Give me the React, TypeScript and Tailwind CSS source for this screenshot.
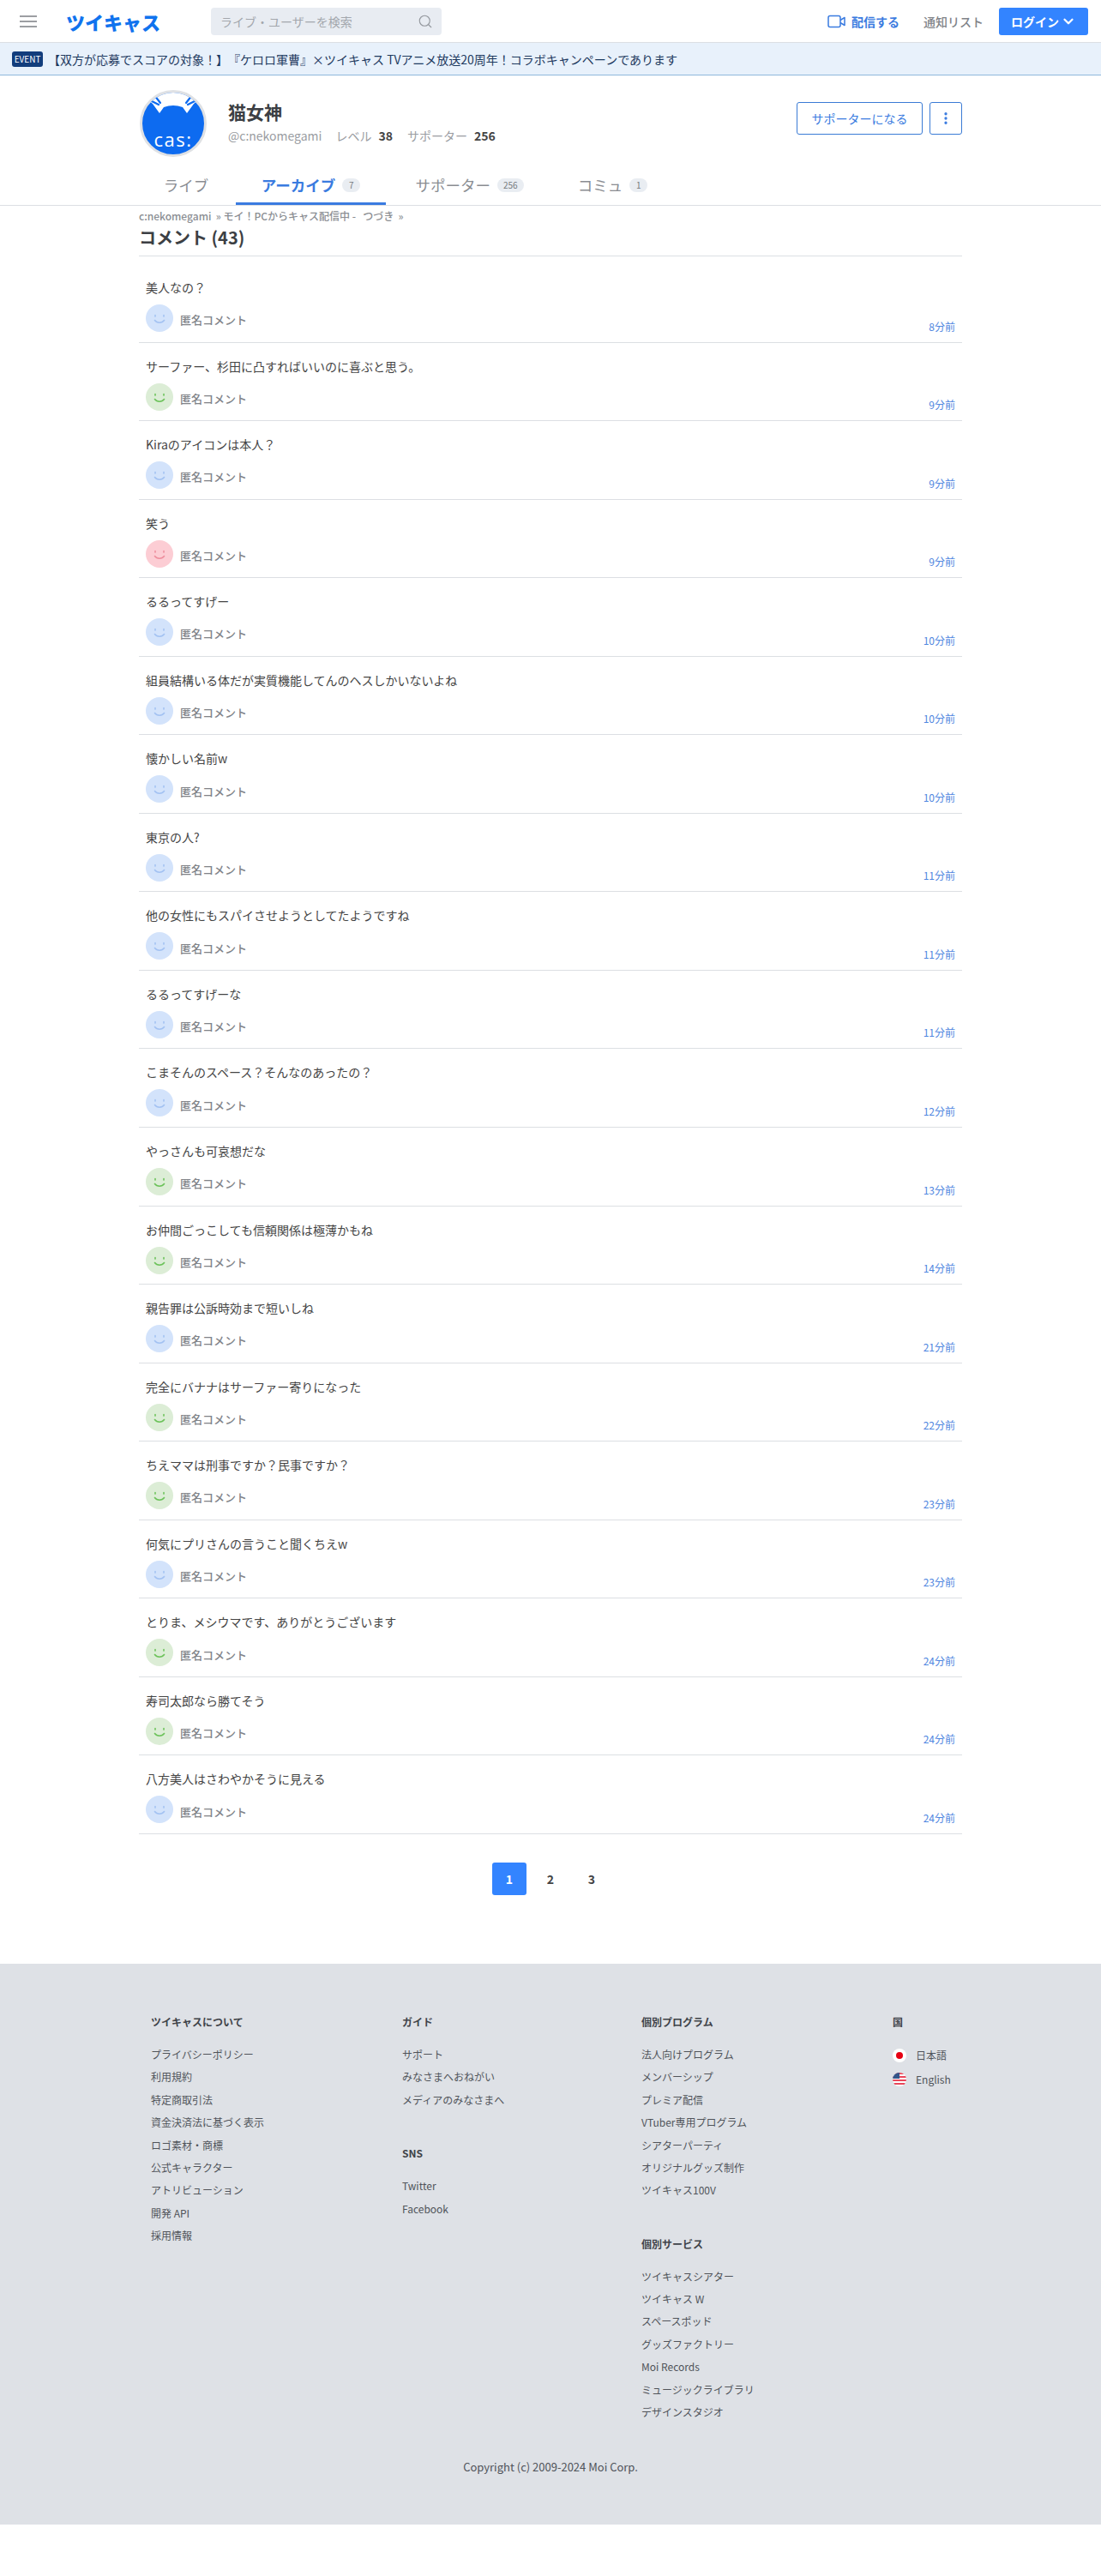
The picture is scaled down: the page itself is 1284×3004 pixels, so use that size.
import { ChevronDown, EllipsisVertical, Search } from 'lucide-react'

const FONT = 'font-["Noto_Sans_CJK_JP","Noto_Sans",sans-serif]'

type Tone = 'blue' | 'green' | 'pink'

const COMMENTS: { text: string; time: string; tone: Tone }[] = [
  { text: '美人なの？', time: '8分前', tone: 'blue' },
  { text: 'サーファー、杉田に凸すればいいのに喜ぶと思う。', time: '9分前', tone: 'green' },
  { text: 'Kiraのアイコンは本人？', time: '9分前', tone: 'blue' },
  { text: '笑う', time: '9分前', tone: 'pink' },
  { text: 'るるってすげー', time: '10分前', tone: 'blue' },
  { text: '組員結構いる体だが実質機能してんのヘスしかいないよね', time: '10分前', tone: 'blue' },
  { text: '懐かしい名前w', time: '10分前', tone: 'blue' },
  { text: '東京の人?', time: '11分前', tone: 'blue' },
  { text: '他の女性にもスパイさせようとしてたようですね', time: '11分前', tone: 'blue' },
  { text: 'るるってすげーな', time: '11分前', tone: 'blue' },
  { text: 'こまそんのスペース？そんなのあったの？', time: '12分前', tone: 'blue' },
  { text: 'やっさんも可哀想だな', time: '13分前', tone: 'green' },
  { text: 'お仲間ごっこしても信頼関係は極薄かもね', time: '14分前', tone: 'green' },
  { text: '親告罪は公訴時効まで短いしね', time: '21分前', tone: 'blue' },
  { text: '完全にバナナはサーファー寄りになった', time: '22分前', tone: 'green' },
  { text: 'ちえママは刑事ですか？民事ですか？', time: '23分前', tone: 'green' },
  { text: '何気にプリさんの言うこと聞くちえw', time: '23分前', tone: 'blue' },
  { text: 'とりま、メシウマです、ありがとうございます', time: '24分前', tone: 'green' },
  { text: '寿司太郎なら勝てそう', time: '24分前', tone: 'green' },
  { text: '八方美人はさわやかそうに見える', time: '24分前', tone: 'blue' },
]

const TONES = {
  blue: { bg: 'bg-[#d3e3fb]', stroke: '#a3c2f2' },
  green: { bg: 'bg-[#dcedd6]', stroke: '#6cc25a' },
  pink: { bg: 'bg-[#fccdd4]', stroke: '#ee8f9e' },
}

const FOOTER_LEFT = ['プライバシーポリシー', '利用規約', '特定商取引法', '資金決済法に基づく表示', 'ロゴ素材・商標', '公式キャラクター', 'アトリビューション', '開発 API', '採用情報']
const FOOTER_GUIDE = ['サポート', 'みなさまへおねがい', 'メディアのみなさまへ']
const FOOTER_SNS = ['Twitter', 'Facebook']
const FOOTER_PROGRAM = ['法人向けプログラム', 'メンバーシップ', 'プレミア配信', 'VTuber専用プログラム', 'シアターパーティ', 'オリジナルグッズ制作', 'ツイキャス100V']
const FOOTER_SERVICE = ['ツイキャスシアター', 'ツイキャス W', 'スペースポッド', 'グッズファクトリー', 'Moi Records', 'ミュージックライブラリ', 'デザインスタジオ']

const Smiley = ({ tone }: { tone: Tone }) => (
  <div className={`w-8 h-8 rounded-full flex items-center justify-center shrink-0 ${TONES[tone].bg}`}>
    <svg width="32" height="32" viewBox="0 0 32 32" fill="none" stroke={TONES[tone].stroke} strokeWidth="1.6" strokeLinecap="round">
      <path d="M11 12.5v1.600M21 12.5v1.600" />
      <path d="M10.5 18.500c2.500 3.600 8.500 3.600 11 0" />
    </svg>
  </div>
)

const Avatar = () => (
  <div className="w-[78px] h-[78px] rounded-full border-[3px] border-[#dfe1e4] overflow-hidden bg-[#0d6bf0] relative shrink-0">
    <svg className="absolute inset-0" width="72" height="72" viewBox="0 0 72 72">
      <path d="M8 0H64L66 8L60 13L52 24L47 17Q36 13 25 17L20 24L12 13L6 8Z" fill="#fff" />
      <path d="M0 0H14L10 5L3 9L0 10ZM72 0H58L62 5L69 9L72 10Z" fill="#0d6bf0" />
      <g stroke="#0d6bf0" strokeWidth="2.2" fill="none" strokeLinecap="round">
        <path d="M9 9l10 5M14 3l7 9" />
        <path d="M63 9l-10 5M58 3l-7 9" />
      </g>
    </svg>
    <span className="absolute left-0 right-0 top-[41px] text-center text-[22px] leading-[26px] text-white tracking-[1.5px] font-['Open_Sans',sans-serif]">cas:</span>
  </div>
)

const FooterTitle = ({ children }: { children: string }) => (
  <h3 className="text-xs leading-[18px] font-bold text-[#3f4349]">{children}</h3>
)

const FooterLinks = ({ items }: { items: string[] }) => (
  <ul className="mt-[16px] flex flex-col">
    {items.map(item => (
      <li key={item} className="h-[26.4px] text-xs leading-[26.4px] text-[#50545a] whitespace-nowrap">{item}</li>
    ))}
  </ul>
)

const Tab = ({ label, count, active, className }: { label: string; count?: string; active?: boolean; className: string }) => (
  <div className={`flex items-center justify-center gap-2 border-b-[3px] pt-[12px] ${active ? 'border-[#3a7be0]' : 'border-transparent'} ${className}`}>
    <span className={`text-[17.5px] leading-6 whitespace-nowrap ${active ? 'font-bold text-[#3a7be0]' : 'text-[#8a8d92]'}`}>{label}</span>
    {count && <span className="h-4 min-w-[21px] px-[7px] rounded-full bg-[#e9edf2] text-[10px] leading-4 text-center text-[#777b80]">{count}</span>}
  </div>
)

export default function App() {
  return (
    <div className={`${FONT} min-h-[3004px] bg-white text-[#444] [text-spacing-trim:space-all]`}>
      {/* header */}
      <header className="h-[50px] border-b border-[#dcdfe3] flex items-center pl-[23px] pr-[15px]">
        <svg width="20" height="14" viewBox="0 0 20 14" stroke="#7c7f84" strokeWidth="1.600">
          <path d="M0 1h20M0 7h20M0 13h20" />
        </svg>
        <span className="ml-[34px] w-[107px] text-[22px] leading-[28px] font-black text-[#1073ee] whitespace-nowrap">ツイキャス</span>
        <div className="ml-[62px] w-[269px] h-8 rounded bg-[#e8ecf2] flex items-center justify-between pl-[11px] pr-[10px]">
          <span className="text-sm text-[#a3a7ad]">ライブ・ユーザーを検索</span>
          <Search size={18} strokeWidth={1.5} className="text-[#94989e]" />
        </div>
        <div className="ml-auto flex items-center">
          <svg width="21" height="16" viewBox="0 0 21 16" fill="none" stroke="#3a7be0" strokeWidth="1.500" strokeLinejoin="round">
            <rect x="1" y="1.500" width="14" height="13" rx="2" />
            <path d="M15 6.500l5-3v9l-5-3" />
          </svg>
          <span className="ml-[7px] text-sm font-bold text-[#3a7be0]">配信する</span>
          <span className="ml-[28px] text-sm font-medium text-[#808388]">通知リスト</span>
          <button className="ml-[18px] w-[104px] h-8 rounded-[3px] bg-[#3384ff] text-white text-sm font-bold flex items-center justify-center gap-[2px]">
            ログイン
            <ChevronDown size={18} strokeWidth={3} />
          </button>
        </div>
      </header>

      {/* event notice */}
      <div className="h-[38px] bg-[#e8f1fb] border-b border-[#8fb8dc] flex items-center pl-[14px]">
        <span className="w-9 h-[18px] rounded-[3px] bg-[#123d7c] text-white text-[10px] leading-[18px] text-center">EVENT</span>
        <span className="ml-[6px] text-sm text-[#1e3a5f] whitespace-nowrap">【双方が応募でスコアの対象！】『ケロロ軍曹』×ツイキャス TVアニメ放送20周年！コラボキャンペーンであります</span>
      </div>

      {/* profile */}
      <div className="w-[960px] mx-auto pl-px">
        <div className="h-[95px] pt-[17px] flex items-start">
          <Avatar />
          <div className="ml-[25px] pt-[9px]">
            <h1 className="text-[21px] leading-[32px] font-bold text-[#3c3f44]">猫女神</h1>
            <p className="mt-[2px] flex items-center text-sm leading-5 text-[#9a9da2]">
              <span>@c:nekomegami</span>
              <span className="ml-[16px]">レベル</span>
              <b className="ml-[8px] text-[#444]">38</b>
              <span className="ml-[17px]">サポーター</span>
              <b className="ml-[8px] text-[#444]">256</b>
            </p>
          </div>
          <div className="ml-auto mt-[14px] flex gap-[8px]">
            <button className="w-[147px] h-[38px] rounded-[3px] border border-[#3a7bd5] text-sm text-[#3a7be0]">サポーターになる</button>
            <button className="w-[38px] h-[38px] rounded-[3px] border border-[#3a7bd5] flex items-center justify-center text-[#3a7be0]">
              <EllipsisVertical size={18} strokeWidth={2.4} />
            </button>
          </div>
        </div>
      </div>

      {/* tabs */}
      <div className="border-b border-[#dcdfe3]">
        <div className="w-[960px] mx-auto h-[56px] pl-[29px] flex">
          <Tab label="ライブ" className="w-[52px]" />
          <Tab label="アーカイブ" count="7" active className="ml-[32px] w-[175px]" />
          <Tab label="サポーター" count="256" className="ml-[32px] w-[131px]" />
          <Tab label="コミュ" count="1" className="ml-[61px] w-[81px]" />
        </div>
      </div>

      <main className="w-[960px] mx-auto">
        <p className="mt-[3px] h-[18px] text-xs leading-[18px] font-medium text-[#8b8e93] whitespace-pre">{'c:nekomegami  » モイ！PCからキャス配信中 -   つづき  »'}</p>
        <h2 className="mt-px h-[37px] text-xl leading-[30px] font-bold text-[#3c3f44] border-b border-[#dcdfe3]">コメント (43)</h2>

        <ul className="mt-[9px]">
          {COMMENTS.map((c, i) => (
            <li key={i} className="h-[91.55px] border-b border-[#dcdfe3] relative pt-[16px] pl-[8px]">
              <p className="text-sm leading-[22px] text-[#444]">{c.text}</p>
              <div className="mt-[9px] flex items-center">
                <Smiley tone={c.tone} />
                <span className="ml-[8px] mt-[4px] text-[13px] text-[#808388] font-medium">匿名コメント</span>
              </div>
              <span className="absolute right-[8px] bottom-[9px] text-xs leading-[18px] text-[#4f86e0]">{c.time}</span>
            </li>
          ))}
        </ul>

        <div className="mt-[33px] ml-[412px] flex text-sm font-bold">
          <span className="w-10 h-[38px] rounded-[3px] bg-[#3384ff] text-white flex items-center justify-center">1</span>
          <span className="ml-[8px] w-10 h-[38px] flex items-center justify-center text-[#444]">2</span>
          <span className="ml-[8px] w-10 h-[38px] flex items-center justify-center text-[#444]">3</span>
        </div>
      </main>

      {/* footer */}
      <footer className="mt-[80px] h-[654px] bg-[#dee1e6] relative">
        <div className="pt-[59px] pl-[176px] flex">
          <div className="w-[293px]">
            <FooterTitle>ツイキャスについて</FooterTitle>
            <FooterLinks items={FOOTER_LEFT} />
          </div>
          <div className="w-[279px]">
            <FooterTitle>ガイド</FooterTitle>
            <FooterLinks items={FOOTER_GUIDE} />
            <div className="mt-[40px]">
              <FooterTitle>SNS</FooterTitle>
              <FooterLinks items={FOOTER_SNS} />
            </div>
          </div>
          <div className="w-[293px]">
            <FooterTitle>個別プログラム</FooterTitle>
            <FooterLinks items={FOOTER_PROGRAM} />
            <div className="mt-[40px]">
              <FooterTitle>個別サービス</FooterTitle>
              <FooterLinks items={FOOTER_SERVICE} />
            </div>
          </div>
          <div>
            <FooterTitle>国</FooterTitle>
            <ul className="mt-[16px] text-xs text-[#50545a]">
              <li className="h-[28px] flex items-center gap-[11px]">
                <span className="w-4 h-4 rounded-full bg-white flex items-center justify-center">
                  <span className="w-2 h-2 rounded-full bg-[#e60012]" />
                </span>
                日本語
              </li>
              <li className="h-[28px] flex items-center gap-[11px]">
                <svg width="16" height="16" viewBox="0 0 16 16" className="rounded-full">
                  <rect width="16" height="16" fill="#fff" />
                  <path d="M0 0h16v2H0zM0 4h16v2H0zM0 8h16v2H0zM0 12h16v2H0z" fill="#e8465a" />
                  <path d="M0 0h8v7H0z" fill="#33568a" />
                </svg>
                English
              </li>
            </ul>
          </div>
        </div>
        <p className="absolute left-0 right-0 top-[577px] text-center text-[13px] leading-5 text-[#50545a]">Copyright (c) 2009-2024 Moi Corp.</p>
      </footer>
    </div>
  )
}
